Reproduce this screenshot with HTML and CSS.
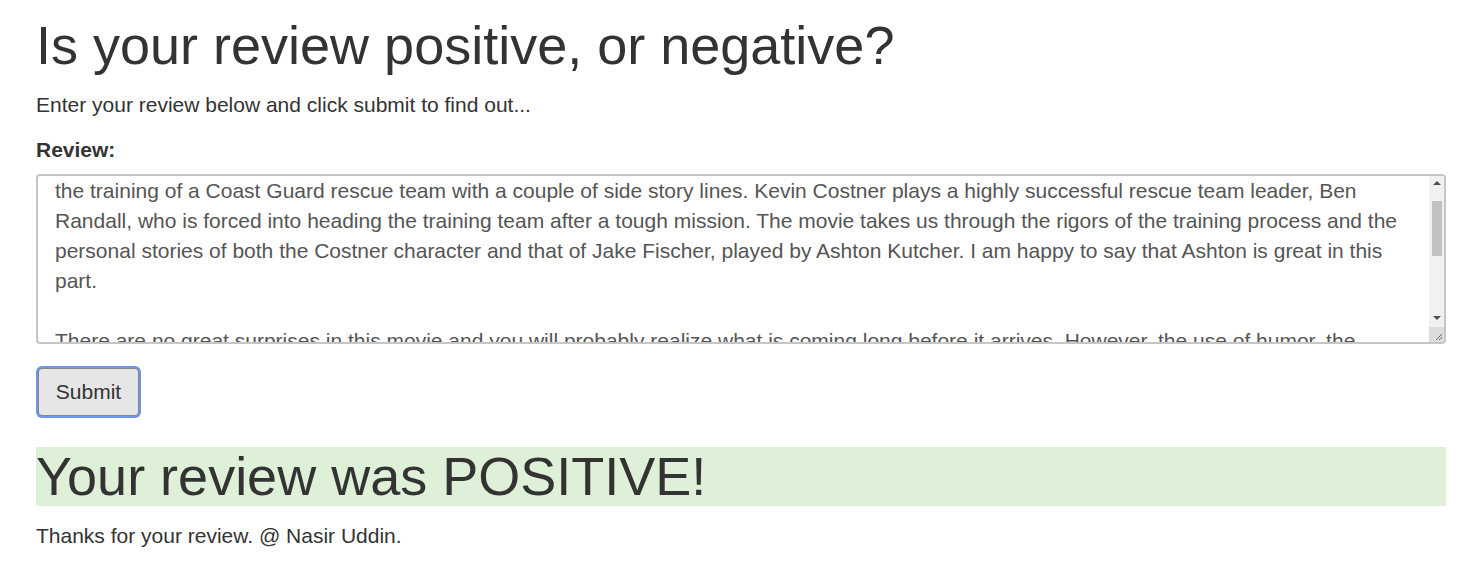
FILE: index.html
```html
<!DOCTYPE html>
<html lang="en">
<head>
<meta charset="utf-8">
<title>Sentiment Analysis</title>
<link rel="stylesheet" href="styles.css">
</head>
<body>
<div class="container">
  <h1 class="title">Is your review positive, or negative?</h1>
  <p class="lead-text">Enter your review below and click submit to find out...</p>
  <form class="review-form">
    <label class="review-label" for="review">Review:</label>
    <div class="review-wrap">
      <textarea id="review" class="review-box">the training of a Coast Guard rescue team with a couple of side story lines. Kevin Costner plays a highly successful rescue team leader, Ben Randall, who is forced into heading the training team after a tough mission. The movie takes us through the rigors of the training process and the personal stories of both the Costner character and that of Jake Fischer, played by Ashton Kutcher. I am happy to say that Ashton is great in this part.

There are no great surprises in this movie and you will probably realize what is coming long before it arrives. However, the use of humor, the action sequences and the performances of the lead actors make this a very enjoyable film to watch.</textarea>
      <div class="sb" aria-hidden="true">
        <div class="sb-btn sb-up"><span class="tri-up"></span></div>
        <div class="sb-track"><div class="sb-thumb"></div></div>
        <div class="sb-btn sb-down"><span class="tri-down"></span></div>
      </div>
      <div class="sb-corner" aria-hidden="true">
        <svg width="15" height="15" viewBox="0 0 15 15"><path d="M13 7 L7 13 M13 10 L10 13" stroke="#6b6b6b" stroke-width="1" fill="none"/></svg>
      </div>
    </div>
    <div class="actions">
      <button type="button" class="btn-submit">Submit</button>
    </div>
  </form>
  <h1 class="result">Your review was POSITIVE!</h1>
  <p class="thanks">Thanks for your review. @ Nasir Uddin.</p>
</div>
</body>
</html>
```

FILE: styles.css
```css
html, body {
  margin: 0;
  padding: 0;
  background: #fff;
}
body {
  font-family: "Liberation Sans", Arial, sans-serif;
  color: #333;
  font-size: 21px;
  line-height: 1.5;
}
.container {
  padding: 0 33px 0 36px;
}
.title {
  font-size: 54px;
  font-weight: 400;
  line-height: 1.1;
  margin: 16px 0 0;
}
.lead-text {
  margin: 14px 0 0;
}
.review-form {
  margin-top: 13.5px;
  display: flex;
  flex-direction: column;
}
.review-label {
  font-weight: 700;
  margin-bottom: 8px;
}
.review-wrap {
  position: relative;
  height: 170px;
}
.review-box {
  box-sizing: border-box;
  display: block;
  width: 100%;
  height: 170px;
  border: 2px solid #c6c6c6;
  border-radius: 4px;
  padding: 0 32px 0 17px;
  font-family: "Liberation Sans", Arial, sans-serif;
  font-size: 21px;
  line-height: 30px;
  color: #555;
  resize: none;
  overflow: hidden;
  margin: 0;
  background: #fff;
}
.sb {
  position: absolute;
  top: 2px;
  right: 2px;
  bottom: 17px;
  width: 15px;
  background: #f1f1f1;
  display: flex;
  flex-direction: column;
}
.sb-btn {
  height: 15px;
  display: flex;
  align-items: center;
  justify-content: center;
  flex: none;
}
.sb-down {
  height: 13px;
  margin-bottom: 2px;
}
.tri-up {
  width: 0;
  height: 0;
  border-left: 4px solid transparent;
  border-right: 4px solid transparent;
  border-bottom: 4px solid #505050;
}
.tri-down {
  width: 0;
  height: 0;
  border-left: 4px solid transparent;
  border-right: 4px solid transparent;
  border-top: 4px solid #505050;
}
.sb-track {
  flex: 1;
  padding: 10px 2px 0 3px;
}
.sb-thumb {
  height: 55px;
  background: #c1c1c1;
}
.sb-corner {
  position: absolute;
  right: 2px;
  bottom: 2px;
  width: 15px;
  height: 15px;
  background: #dcdcdc;
}
.sb-corner svg {
  display: block;
}
.actions {
  margin-top: 22px;
}
.btn-submit {
  box-sizing: border-box;
  width: 101px;
  height: 48px;
  margin: 2px;
  font-family: "Liberation Sans", Arial, sans-serif;
  font-size: 21px;
  color: #333;
  background: #e6e6e6;
  border: 1px solid #858585;
  border-radius: 4px;
  outline: none;
  box-shadow: 0 0 0 2px #7094e6;
  padding: 0;
  cursor: pointer;
}
.result {
  font-size: 54px;
  font-weight: 400;
  line-height: 1.1;
  background: #dff0d8;
  margin: 29px 0 0;
}
.thanks {
  margin: 13.3px 0 0;
}
```
